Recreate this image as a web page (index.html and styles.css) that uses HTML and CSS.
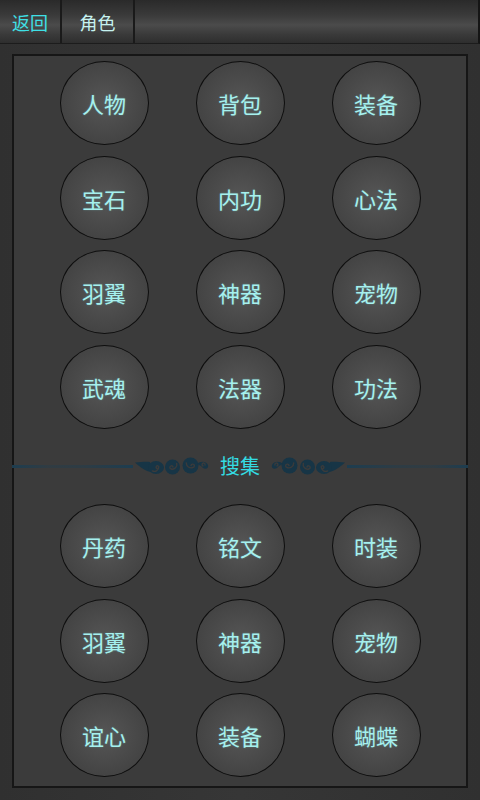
FILE: index.html
```html
<!DOCTYPE html>
<html lang="zh">
<head>
<meta charset="utf-8">
<link rel="stylesheet" href="styles.css">
</head>
<body>
<div class="header">
  <div class="tab tab-back">返回</div>
  <div class="tab tab-role">角色</div>
</div>
<div class="panel">
  <div class="grid">
    <div class="btn">人物</div><div class="btn">背包</div><div class="btn">装备</div>
    <div class="btn">宝石</div><div class="btn">内功</div><div class="btn">心法</div>
    <div class="btn">羽翼</div><div class="btn">神器</div><div class="btn">宠物</div>
    <div class="btn">武魂</div><div class="btn">法器</div><div class="btn">功法</div>
  </div>
  <div class="divider">
    <div class="line line-left"></div>
    <svg class="orn" width="80" height="18" viewBox="0 0 80 18">
      <g fill="#173546">
        <path d="M2 5.5 C8 5 13 4.5 17 5 L18 15 C12 14 7 10 2 5.5 Z"/>
        <ellipse cx="23" cy="10.5" rx="8" ry="6.5"/>
        <circle cx="39.5" cy="10" r="7.5"/>
        <circle cx="57.5" cy="8.5" r="8"/>
        <path d="M64 7 C67 4 73 4 75 8 C76 11 73 13 70 11 L68 9 Z"/>
      </g>
      <g fill="none" stroke="#3b3b3b" stroke-width="1.4" stroke-linecap="round">
        <path d="M24 11.5 a1.4 1.4 0 1 1 1.8 -1.8 a4.5 4.5 0 0 1 -6.5 4.2"/>
        <path d="M40 10 a1.6 1.6 0 1 0 -1.8 2 a4.5 4.5 0 0 0 5.5 -5.5"/>
        <path d="M58 8.5 a1.7 1.7 0 1 1 1.8 2 a4.8 4.8 0 0 1 -6.5 -4.5"/>
        <path d="M70 9 a1.5 1.5 0 1 1 2 -1"/>
      </g>
    </svg>
    <span class="div-title">搜集</span>
    <svg class="orn flip" width="80" height="18" viewBox="0 0 80 18">
      <g fill="#173546">
        <path d="M2 5.5 C8 5 13 4.5 17 5 L18 15 C12 14 7 10 2 5.5 Z"/>
        <ellipse cx="23" cy="10.5" rx="8" ry="6.5"/>
        <circle cx="39.5" cy="10" r="7.5"/>
        <circle cx="57.5" cy="8.5" r="8"/>
        <path d="M64 7 C67 4 73 4 75 8 C76 11 73 13 70 11 L68 9 Z"/>
      </g>
      <g fill="none" stroke="#3b3b3b" stroke-width="1.4" stroke-linecap="round">
        <path d="M24 11.5 a1.4 1.4 0 1 1 1.8 -1.8 a4.5 4.5 0 0 1 -6.5 4.2"/>
        <path d="M40 10 a1.6 1.6 0 1 0 -1.8 2 a4.5 4.5 0 0 0 5.5 -5.5"/>
        <path d="M58 8.5 a1.7 1.7 0 1 1 1.8 2 a4.8 4.8 0 0 1 -6.5 -4.5"/>
        <path d="M70 9 a1.5 1.5 0 1 1 2 -1"/>
      </g>
    </svg>
    <div class="line line-right"></div>
  </div>
  <div class="grid">
    <div class="btn">丹药</div><div class="btn">铭文</div><div class="btn">时装</div>
    <div class="btn">羽翼</div><div class="btn">神器</div><div class="btn">宠物</div>
    <div class="btn">谊心</div><div class="btn">装备</div><div class="btn">蝴蝶</div>
  </div>
</div>
</body>
</html>
```
FILE: styles.css
```css
html, body {
  margin: 0;
  padding: 0;
}
body {
  width: 480px;
  height: 800px;
  overflow: hidden;
  background: linear-gradient(to right, #303030, #363636 50%, #303030);
  font-family: "Noto Sans CJK SC", "Noto Sans", sans-serif;
}
.header {
  height: 43px;
  display: flex;
  background: linear-gradient(to bottom, #2a2a2a 0%, #3a3a3a 35%, #4b4b4b 58%, #3a3a3a 80%, #2e2e2e 100%);
  border-bottom: 1px solid #1c1c1c;
  border-right: 2px solid #151515;
}
.tab {
  display: flex;
  align-items: center;
  justify-content: center;
  font-size: 18px;
  height: 43px;
  border-right: 2px solid #1a1a1a;
  box-sizing: border-box;
}
.tab-back {
  width: 62px;
  color: #3fe0e6;
}
.tab-role {
  width: 73px;
  color: #c6f2f0;
}
.panel {
  margin: 10px 12px 0 12px;
  height: 734px;
  box-sizing: border-box;
  border: 2px solid #161616;
  background: #3b3b3b;
  padding-top: 5px;
}
.grid {
  display: grid;
  grid-template-columns: repeat(3, 136px);
  justify-content: center;
  row-gap: 10.67px;
  justify-items: center;
}
.btn {
  width: 89px;
  height: 84px;
  box-sizing: border-box;
  border-radius: 50%;
  border: 1.5px solid #0e0e0e;
  background: radial-gradient(ellipse at 50% 50%, #565656 0%, #4a4a4a 45%, #3c3c3c 100%);
  display: flex;
  align-items: center;
  justify-content: center;
  color: #a6f0ee;
  font-size: 22px;
  text-shadow: 0 0 2px rgba(120, 230, 230, 0.35);
}
.divider {
  height: 75px;
  display: flex;
  align-items: center;
  margin-left: -2px;
  margin-right: -2px;
}
.line {
  flex: 1;
  height: 3px;
}
.line-left {
  background: linear-gradient(to right, #1d3d50 0%, rgba(29,61,80,0.35) 30%, rgba(29,61,80,0.45) 60%, #1d3d50 100%);
}
.line-right {
  background: linear-gradient(to left, #1d3d50 0%, rgba(29,61,80,0.35) 30%, rgba(29,61,80,0.45) 60%, #1d3d50 100%);
}
.orn {
  display: block;
}
.flip {
  transform: scaleX(-1);
}
.div-title {
  color: #34dbe3;
  font-size: 20px;
  padding: 0 7px;
  line-height: 1;
}
```
